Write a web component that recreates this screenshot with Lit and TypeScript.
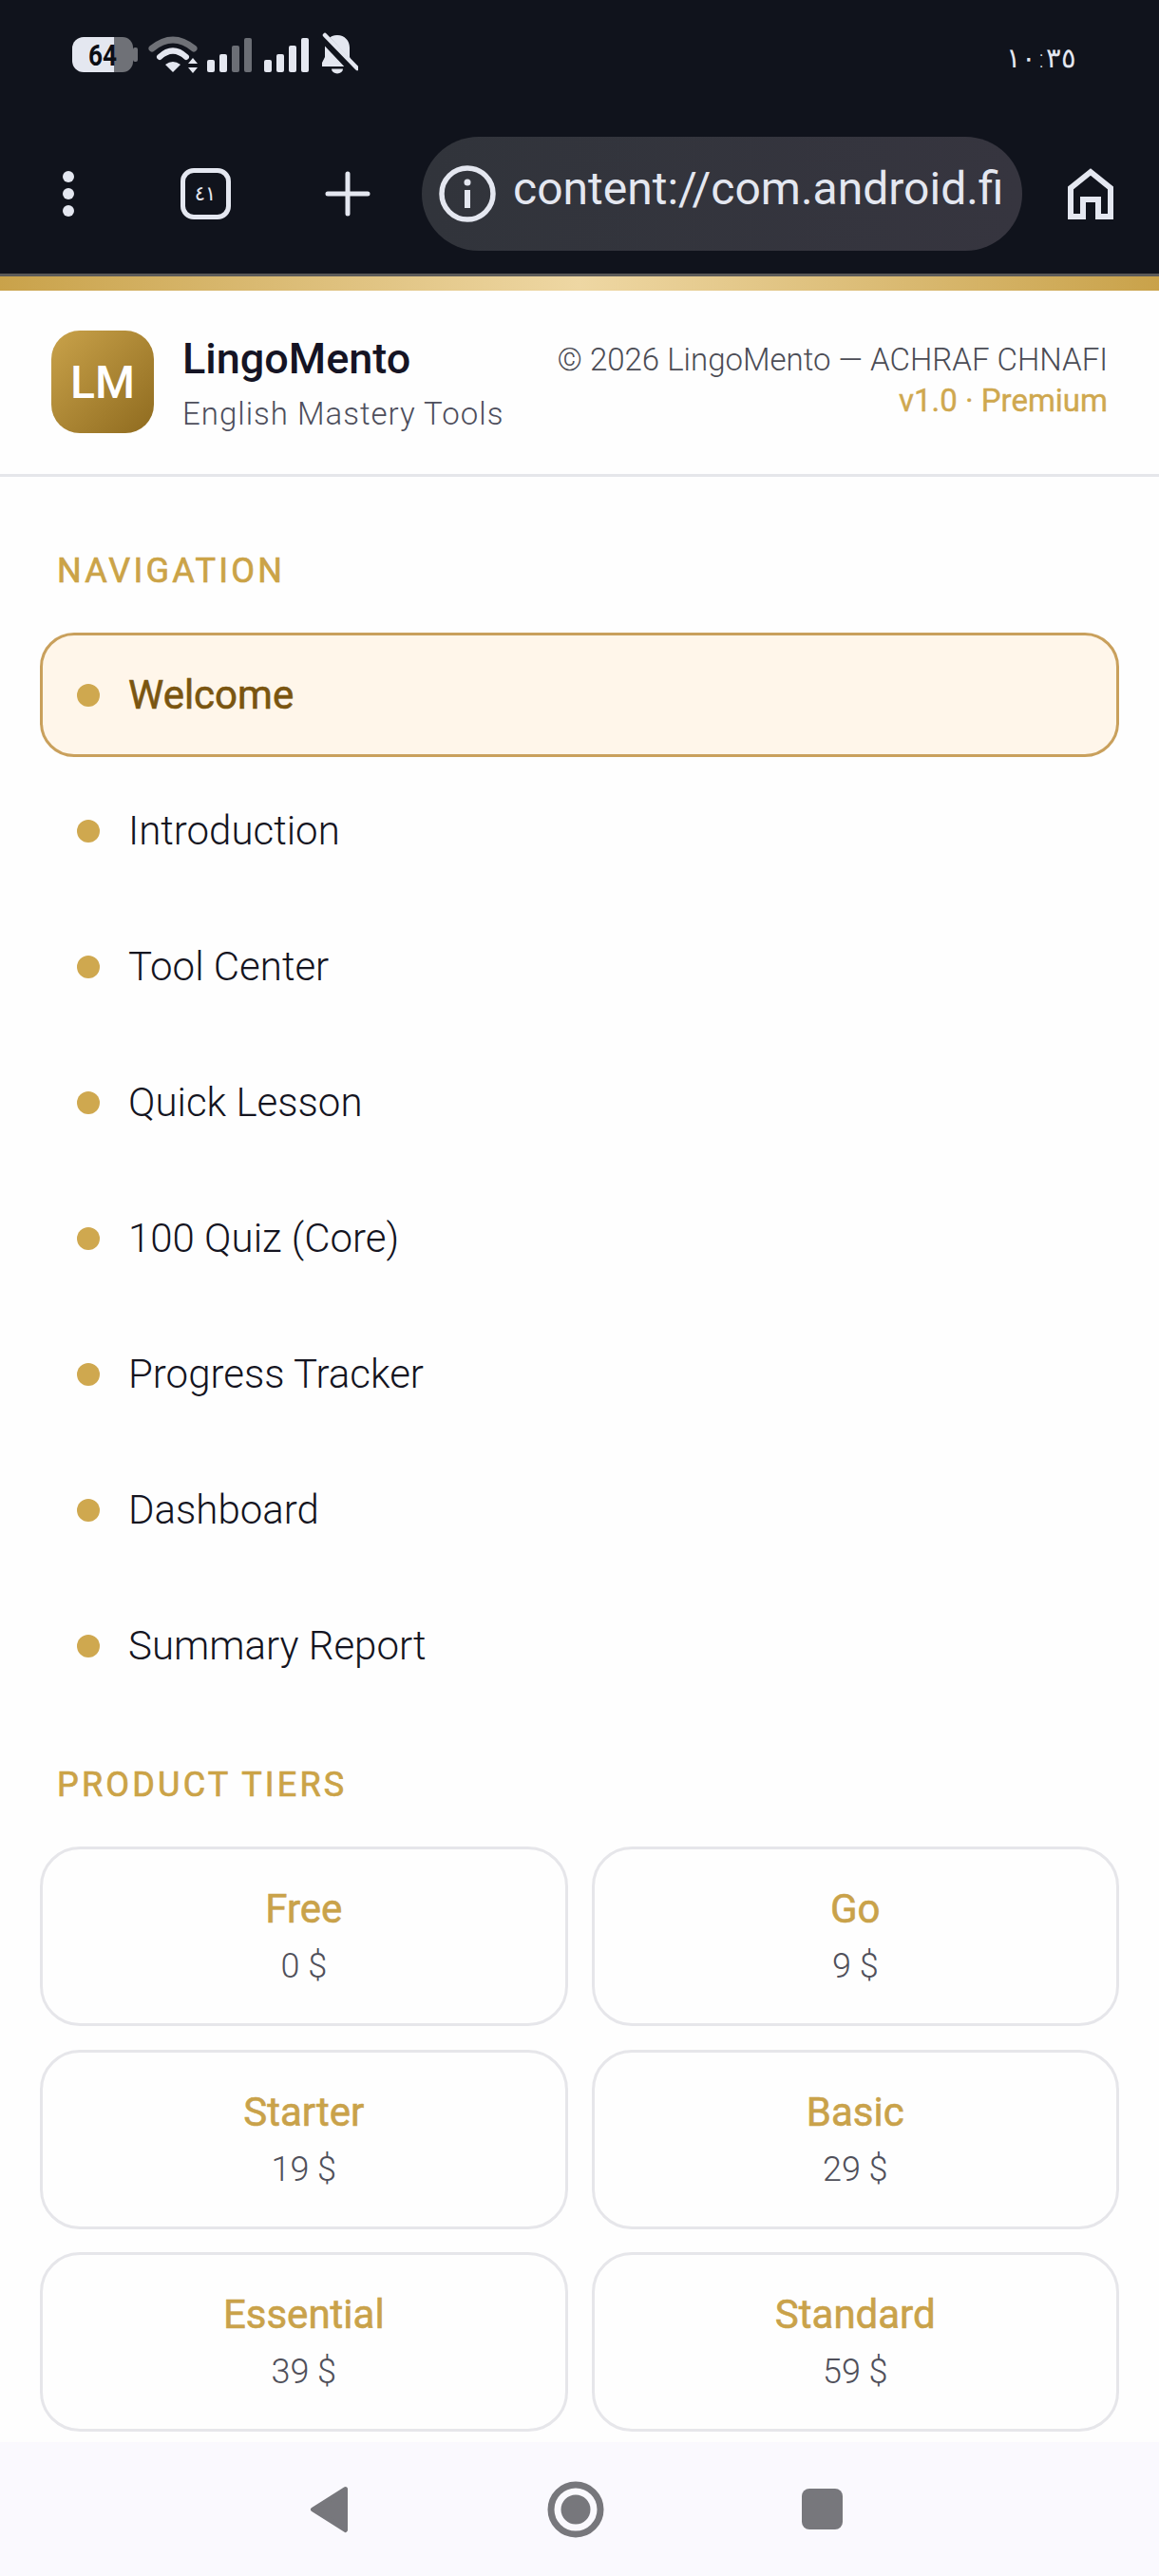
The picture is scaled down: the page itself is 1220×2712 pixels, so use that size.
import { LitElement, css, html, svg } from "lit";

const NAV_ITEMS = [
  "Welcome",
  "Introduction",
  "Tool Center",
  "Quick Lesson",
  "100 Quiz (Core)",
  "Progress Tracker",
  "Dashboard",
  "Summary Report",
];

const TIERS = [
  { name: "Free", price: "0 $" },
  { name: "Go", price: "9 $" },
  { name: "Starter", price: "19 $" },
  { name: "Basic", price: "29 $" },
  { name: "Essential", price: "39 $" },
  { name: "Standard", price: "59 $" },
];

const bars = (x: number, lastDim: number) => {
  const tops = [63, 57, 48, 40];
  return tops.map((top, i) => {
    const left = x + i * 13;
    const fill = i >= lastDim ? "#6b6e75" : "#e4e7f0";
    return svg`<rect x=${left} y=${top} width="8" height=${76 - top} rx="2" fill=${fill}></rect>`;
  });
};

export class AppRoot extends LitElement {
  static styles = css`
    :host {
      display: flex;
      flex-direction: column;
      width: 100%;
      height: 2712px;
      overflow: hidden;
      background: #fefefe;
      font-family: Roboto, "Noto Sans", sans-serif;
      color: #14141f;
    }

    /* browser chrome */
    .chrome {
      background: #10131c;
      color: #e4e7f0;
      height: 288px;
      flex: none;
    }
    .status {
      height: 144px;
      box-sizing: border-box;
      padding: 32px 87px 0 76px;
      display: flex;
      justify-content: space-between;
      align-items: flex-start;
    }
    .status svg {
      display: block;
      margin-top: 2px;
    }
    .time {
      font-family: "DejaVu Sans", sans-serif;
      font-size: 29px;
      line-height: 58px;
      font-weight: 300;
    }
    .toolbar {
      display: grid;
      grid-template-columns: 144px 144px 156px 632px 144px;
      align-items: center;
      height: 120px;
    }
    .tool {
      display: flex;
      align-items: center;
      justify-content: center;
    }
    .tabs {
      width: 53px;
      height: 54px;
      box-sizing: border-box;
      border: 5.5px solid #e4e7f0;
      border-radius: 14px;
      display: flex;
      align-items: center;
      justify-content: center;
      font-family: "DejaVu Sans", sans-serif;
      font-size: 21px;
    }
    .pill {
      height: 120px;
      border-radius: 60px;
      background: linear-gradient(90deg, #31343b, #36353f);
      display: flex;
      align-items: center;
      gap: 18px;
      padding-left: 18px;
      overflow: hidden;
      white-space: nowrap;
    }
    .url {
      font-size: 48px;
      line-height: 60px;
      margin-top: -10px;
      font-weight: 400;
    }
    .accent {
      flex: none;
      height: 15px;
      border-top: 3px solid #5c5a58;
      background: linear-gradient(90deg, #c9a24a, #eed7a3 50%, #c9a24a);
    }

    /* app header */
    .header {
      flex: none;
      height: 196px;
      box-sizing: border-box;
      border-bottom: 3px solid #e5e6ea;
      padding: 42px 54px 0;
      display: flex;
      align-items: flex-start;
    }
    .logo {
      width: 108px;
      height: 108px;
      border-radius: 30px;
      background: linear-gradient(135deg, #c9a24a, #8f6b1f);
      color: #fff;
      display: flex;
      align-items: center;
      justify-content: center;
      font-size: 48px;
      font-weight: 500;
      flex: none;
    }
    .brand {
      margin-left: 30px;
      padding-top: 2px;
      display: flex;
      flex-direction: column;
    }
    .brand-name {
      font-size: 45px;
      line-height: 56px;
      font-weight: 500;
      color: #151424;
    }
    .brand-sub {
      font-size: 33px;
      line-height: 42px;
      margin-top: 9px;
      letter-spacing: 1px;
      font-weight: 300;
      color: #4d4e5c;
    }
    .meta {
      margin-left: auto;
      text-align: right;
      font-size: 33px;
      padding-top: 10px;
    }
    .copyright {
      line-height: 42px;
      font-weight: 300;
      color: #4b4c55;
    }
    .version {
      line-height: 44px;
      font-weight: 400;
      -webkit-text-stroke: 0.4px #cfa84f;
      color: #cfa84f;
    }

    /* sidebar body */
    .content {
      flex: 1;
      min-height: 0;
      padding: 78px 42px 0;
    }
    .section-title {
      margin: 0 0 44px;
      padding-left: 18px;
      font-size: 36px;
      line-height: 42px;
      font-weight: 400;
      -webkit-text-stroke: 0.7px #cba347;
      letter-spacing: 3.2px;
      color: #cba347;
    }
    .section-title.tiers {
      margin-top: 60px;
    }
    .nav {
      display: flex;
      flex-direction: column;
      gap: 12px;
    }
    .nav-item {
      height: 131px;
      box-sizing: border-box;
      border: 3px solid transparent;
      border-radius: 36px;
      padding-left: 36px;
      display: flex;
      align-items: center;
      gap: 30px;
      font-size: 42px;
      font-weight: 300;
    }
    .nav-item.active {
      background: #fff6ea;
      border-color: #c9a05c;
      color: #7a5510;
      font-weight: 400;
      -webkit-text-stroke: 0.6px #7a5510;
    }
    .dot {
      width: 24px;
      height: 24px;
      border-radius: 50%;
      background: #cfa84f;
      flex: none;
    }
    .tier-grid {
      display: grid;
      grid-template-columns: 1fr 1fr;
      gap: 24.5px 25px;
    }
    .tier {
      height: 189px;
      box-sizing: border-box;
      border: 3px solid #e6e6ea;
      border-radius: 42px;
      display: flex;
      flex-direction: column;
      align-items: center;
      justify-content: center;
    }
    .tier-name {
      font-size: 42px;
      line-height: 50px;
      font-weight: 400;
      -webkit-text-stroke: 0.6px #c9a24a;
      color: #c9a24a;
    }
    .tier-price {
      font-size: 36px;
      line-height: 44px;
      margin-top: 13px;
      font-weight: 300;
      color: #50505a;
    }

    /* android nav bar */
    .sysnav {
      flex: none;
      height: 141px;
      background: #faf9fe;
      display: flex;
      align-items: center;
      justify-content: center;
      gap: 200px;
      padding-right: 8px;
    }
  `;

  private statusIcons() {
    return html`<svg width="301" height="45" viewBox="76 34 301 45">
      <!-- battery -->
      <path d="M120.5 39H88a12 12 0 0 0-12 12v13a12 12 0 0 0 12 12h32.5z" fill="#e4e7f0"></path>
      <path d="M120.5 39H129a11 11 0 0 1 11 11v15a11 11 0 0 1-11 11h-8.5z" fill="#6f7177"></path>
      <rect x="140" y="50" width="5" height="15" rx="2" fill="#6f7177"></rect>
      <text x="108" y="69" text-anchor="middle" font-family="Roboto" font-weight="700" font-size="32"
        textLength="30" lengthAdjust="spacingAndGlyphs" fill="#0b0d14">64</text>
      <!-- wifi -->
      <path d="M160 51Q182 33 204 51" fill="none" stroke="#6f7177" stroke-width="7" stroke-linecap="round"></path>
      <path d="M168 60Q182 47 196 60" fill="none" stroke="#e4e7f0" stroke-width="6" stroke-linecap="round"></path>
      <path d="M174 68Q182 62 190 68L182 76z" fill="#e4e7f0"></path>
      <path d="M203 61l5 6h-10zM203 77l5-6h-10z" fill="#e4e7f0"></path>
      <!-- signal -->
      ${bars(218, 2)}
      ${bars(278, 4)}
      <!-- muted bell -->
      <path d="M355 37C363 37 368 43 368 50V60L371 66V70H339V66L342 60V50C342 43 347 37 355 37Z" fill="#e4e7f0"></path>
      <path d="M349 72.5H361A6 5 0 0 1 349 72.5Z" fill="#e4e7f0"></path>
      <path d="M338 37L373 74" stroke="#10131c" stroke-width="10"></path>
      <path d="M342 37L376 72" stroke="#e4e7f0" stroke-width="4.5" stroke-linecap="round"></path>
    </svg>`;
  }

  private toolbar() {
    return html`<div class="toolbar">
      <div class="tool">
        <svg width="12" height="48" viewBox="0 0 12 48" fill="#e4e7f0">
          <circle cx="6" cy="6" r="6"></circle>
          <circle cx="6" cy="24" r="6"></circle>
          <circle cx="6" cy="42" r="6"></circle>
        </svg>
      </div>
      <div class="tool"><div class="tabs">٤١</div></div>
      <div class="tool">
        <svg width="48" height="48" viewBox="0 0 48 48" stroke="#e4e7f0" stroke-width="5" stroke-linecap="round">
          <path d="M3 24H45M24 3V45"></path>
        </svg>
      </div>
      <div class="pill">
        <svg width="60" height="60" viewBox="0 0 60 60" style="flex:none">
          <circle cx="30" cy="30" r="27" fill="none" stroke="#e4e7f0" stroke-width="5.5"></circle>
          <circle cx="30" cy="18" r="3.5" fill="#e4e7f0"></circle>
          <rect x="27" y="26" width="6" height="19" fill="#e4e7f0"></rect>
        </svg>
        <span class="url">content://com.android.fi</span>
      </div>
      <div class="tool">
        <svg width="48" height="54" viewBox="0 0 48 54" fill="none" stroke="#e4e7f0" stroke-width="6">
          <path d="M3 51V21L24 4L45 21V51H32V33H16V51Z"></path>
        </svg>
      </div>
    </div>`;
  }

  render() {
    return html`
      <div class="chrome">
        <div class="status">
          ${this.statusIcons()}
          <span class="time">١٠:٣٥</span>
        </div>
        ${this.toolbar()}
      </div>
      <div class="accent"></div>

      <header class="header">
        <div class="logo">LM</div>
        <div class="brand">
          <div class="brand-name">LingoMento</div>
          <div class="brand-sub">English Mastery Tools</div>
        </div>
        <div class="meta">
          <div class="copyright">© 2026 LingoMento — ACHRAF CHNAFI</div>
          <div class="version">v1.0 · Premium</div>
        </div>
      </header>

      <main class="content">
        <h2 class="section-title">NAVIGATION</h2>
        <nav class="nav">
          ${NAV_ITEMS.map(
            (item, i) => html`<div class="nav-item ${i === 0 ? "active" : ""}">
              <span class="dot"></span><span>${item}</span>
            </div>`
          )}
        </nav>
        <h2 class="section-title tiers">PRODUCT TIERS</h2>
        <div class="tier-grid">
          ${TIERS.map(
            (t) => html`<div class="tier">
              <div class="tier-name">${t.name}</div>
              <div class="tier-price">${t.price}</div>
            </div>`
          )}
        </div>
      </main>

      <footer class="sysnav">
        <svg width="60" height="60" viewBox="0 0 60 60" fill="#77777c">
          <path d="M47.5 8.5L13.5 30L47.5 51.5Z" stroke="#77777c" stroke-width="5" stroke-linejoin="round"></path>
        </svg>
        <svg width="60" height="60" viewBox="0 0 60 60">
          <circle cx="30" cy="30" r="26" fill="none" stroke="#77777c" stroke-width="7"></circle>
          <circle cx="30" cy="30" r="15.5" fill="#77777c"></circle>
        </svg>
        <svg width="60" height="60" viewBox="0 0 60 60">
          <rect x="8" y="8" width="43" height="43" rx="8" fill="#77777c"></rect>
        </svg>
      </footer>
    `;
  }
}

customElements.define("app-root", AppRoot);
